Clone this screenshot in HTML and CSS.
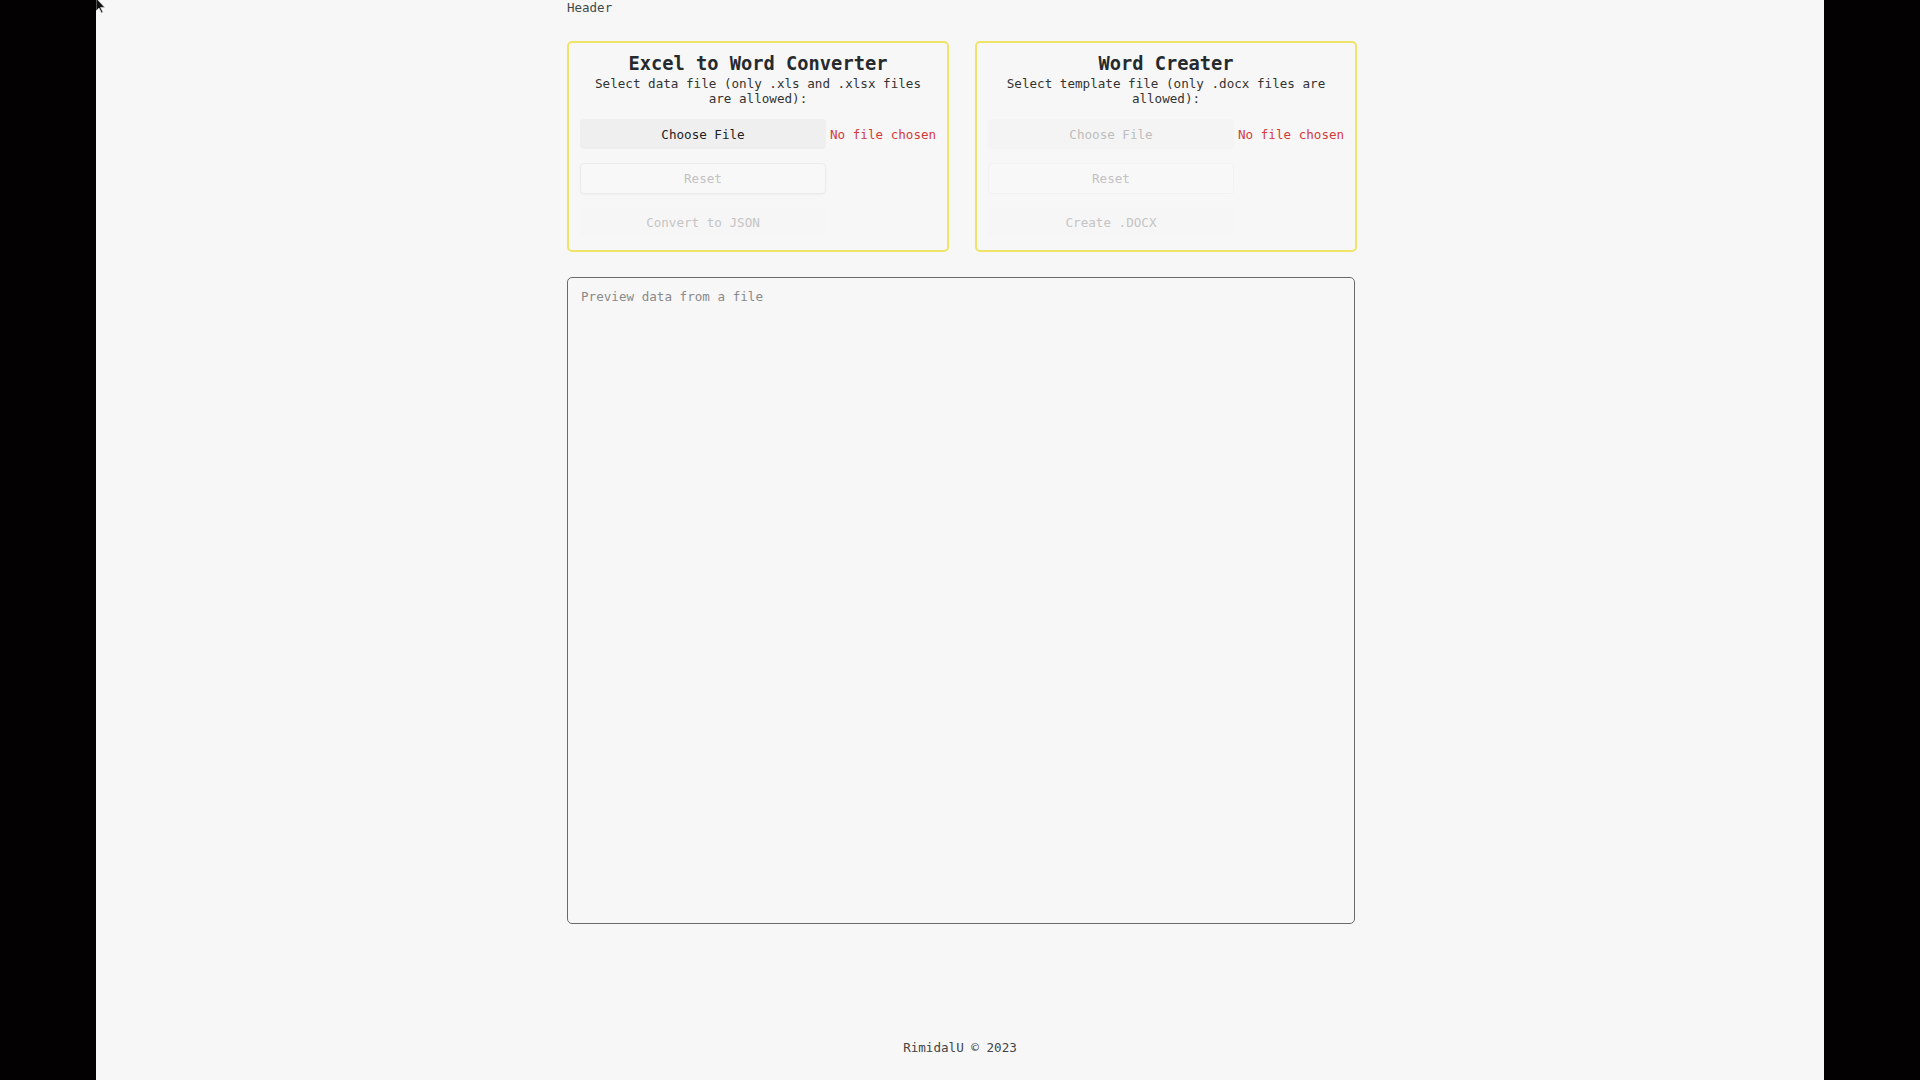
FILE: index.html
```html
<!DOCTYPE html>
<html>
<head>
<meta charset="utf-8">
<title>Excel to Word Converter</title>
<link rel="stylesheet" href="styles.css">
</head>
<body>
<div class="screen">
  <div class="bar"></div>
  <div class="page">
    <svg class="cursor" width="10" height="16" viewBox="0 0 10 16"><path d="M0 0 L0 13 L3 10 L5.5 15 L7 14.3 L4.6 9.4 L8.8 9.4 Z" fill="#111" stroke="#eee" stroke-width="0.6"/></svg>
    <div class="wrap">
      <header class="header">Header</header>
      <main class="main">
        <div class="cards">
          <section class="card">
            <h3 class="card-title">Excel to Word Converter</h3>
            <p class="card-sub">Select data file (only .xls and .xlsx files are allowed):</p>
            <div class="file-row">
              <span class="btn btn-choose">Choose File</span>
              <span class="nofile">No file chosen</span>
            </div>
            <span class="btn btn-reset">Reset</span>
            <span class="btn btn-action">Convert to JSON</span>
          </section>
          <section class="card">
            <h3 class="card-title">Word Creater</h3>
            <p class="card-sub">Select template file (only .docx files are allowed):</p>
            <div class="file-row">
              <span class="btn btn-choose disabled">Choose File</span>
              <span class="nofile">No file chosen</span>
            </div>
            <span class="btn btn-reset ghost">Reset</span>
            <span class="btn btn-action">Create .DOCX</span>
          </section>
        </div>
        <div class="preview">Preview data from a file</div>
      </main>
    </div>
    <footer class="footer">RimidalU © 2023</footer>
  </div>
  <div class="bar"></div>
</div>
</body>
</html>
```

FILE: styles.css
```css
* { box-sizing: border-box; }
html, body { margin: 0; padding: 0; }
body {
  background: #000;
  font-family: "DejaVu Sans Mono", "Liberation Mono", monospace;
  color: #333;
}
.screen {
  display: flex;
  width: 1920px;
  height: 1080px;
}
.bar {
  width: 96px;
  background: #030102;
  flex: none;
}
.page {
  position: relative;
  flex: 1;
  background: #f8f7f7;
  display: flex;
  flex-direction: column;
}
.cursor {
  position: absolute;
  left: 0;
  top: -2px;
}
.wrap {
  width: 790px;
  margin-left: 471px;
  flex: 1;
}
.header {
  font-size: 12.5px;
  line-height: 15px;
  color: #3e4a4a;
  height: 15px;
}
.main {
  padding-top: 26px;
}
.cards {
  display: flex;
  gap: 26px;
}
.card {
  width: 382px;
  height: 211px;
  border: 2px solid #f0e468;
  border-radius: 5px;
  padding: 10px 11px 0 11px;
  display: flex;
  flex-direction: column;
  align-items: flex-start;
}
.card-title {
  margin: 0;
  width: 100%;
  text-align: center;
  font-size: 18.7px;
  line-height: 22px;
  font-weight: bold;
  color: #252a2e;
}
.card-sub {
  margin: 1px 0 0;
  width: 100%;
  text-align: center;
  font-size: 12.6px;
  line-height: 15px;
  color: #333;
}
.file-row {
  display: flex;
  align-items: center;
  gap: 4px;
  margin-top: 13px;
  white-space: nowrap;
}
.btn {
  display: flex;
  align-items: center;
  justify-content: center;
  width: 246px;
  height: 30px;
  font-size: 12.6px;
  border-radius: 4px;
  white-space: nowrap;
}
.btn-choose {
  background: #efefef;
  color: #222;
}
.btn-choose.disabled {
  background: #f5f4f4;
  color: #bdbdbd;
}
.nofile {
  color: #d43a3a;
  font-size: 12.6px;
}
.btn-reset {
  margin-top: 14px;
  height: 31px;
  border: 1px solid #ebebeb;
  background: #f9f8f8;
  box-shadow: 0 1px 2px rgba(0,0,0,0.04);
  color: #c2c2c2;
}
.btn-reset.ghost {
  border-color: #f3f2f2;
  box-shadow: none;
}
.btn-action {
  margin-top: 13px;
  color: #c4c4c4;
  background: #f7f6f6;
}
.preview {
  margin-top: 25px;
  width: 788px;
  height: 647px;
  border: 1px solid #6a6a6a;
  border-radius: 5px;
  padding: 11px 13px;
  font-size: 12.6px;
  line-height: 15px;
  color: #8a8a8a;
}
.footer {
  text-align: center;
  font-size: 12.6px;
  line-height: 15px;
  color: #444;
  padding-bottom: 25px;
}
```
